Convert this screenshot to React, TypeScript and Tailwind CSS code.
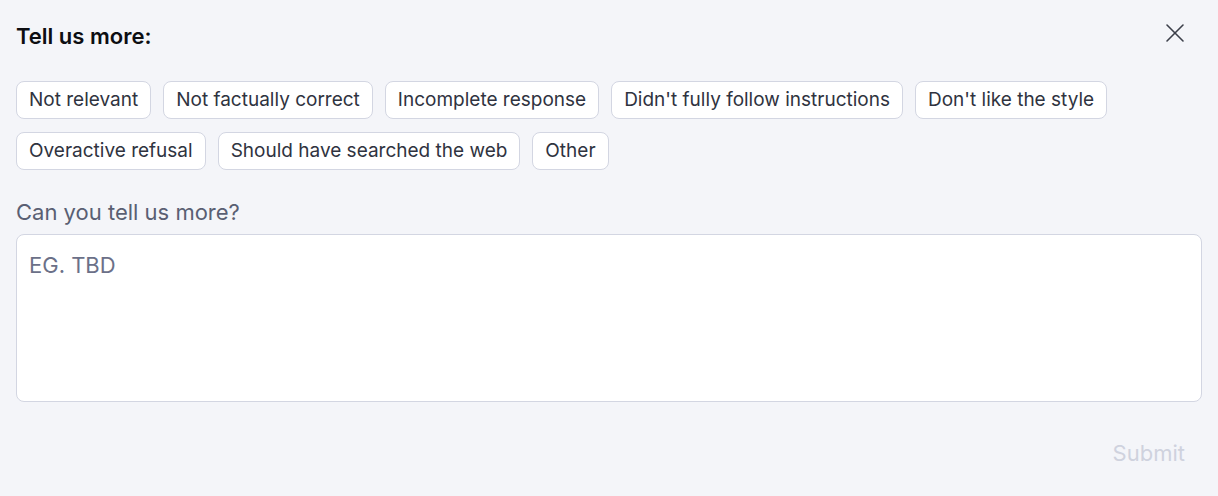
import { X } from 'lucide-react';

const reasons = [
  'Not relevant',
  'Not factually correct',
  'Incomplete response',
  "Didn't fully follow instructions",
  "Don't like the style",
  'Overactive refusal',
  'Should have searched the web',
  'Other',
];

const App = () => {
  return (
    <div
      className="min-h-[496px] w-full bg-[#f4f5f9] px-4 pt-[22px] text-[#2f3340]"
      style={{ fontFamily: 'Inter, "Noto Sans", sans-serif' }}
    >
      {/* Header */}
      <div className="flex h-7 items-center justify-between">
        <h2 className="text-[22px] leading-7 font-semibold text-[#0d0e12]">Tell us more:</h2>
        <button className="mr-[11px] -mt-[6px] text-[#3c3f4a]">
          <X className="h-8 w-8" strokeWidth={1.2} />
        </button>
      </div>

      {/* Reason chips */}
      <div className="mt-[31px] flex flex-wrap gap-x-3 gap-y-[13px]">
        {reasons.map((r) => (
          <button
            key={r}
            className="rounded-lg border border-[#d3d6e2] bg-white px-3 py-[4px] text-[19px] leading-7 text-[#2f3340]"
          >
            {r}
          </button>
        ))}
      </div>

      {/* Free text */}
      <label className="mt-[28px] block text-[22px] leading-7 text-[#5a5f73]">Can you tell us more?</label>
      <textarea
        placeholder="EG. TBD"
        className="mt-2 block h-[168px] w-full resize-none rounded-lg border border-[#d3d6e2] bg-white px-3 py-4 text-[22px] leading-7 text-[#2f3340] placeholder:text-[#6b7088] outline-none"
      />

      <div className="mt-[37px] flex justify-end">
        <button disabled className="pr-[17px] text-[22px] leading-7 text-[#cfd2de]">
          Submit
        </button>
      </div>
    </div>
  );
};

export default App;
